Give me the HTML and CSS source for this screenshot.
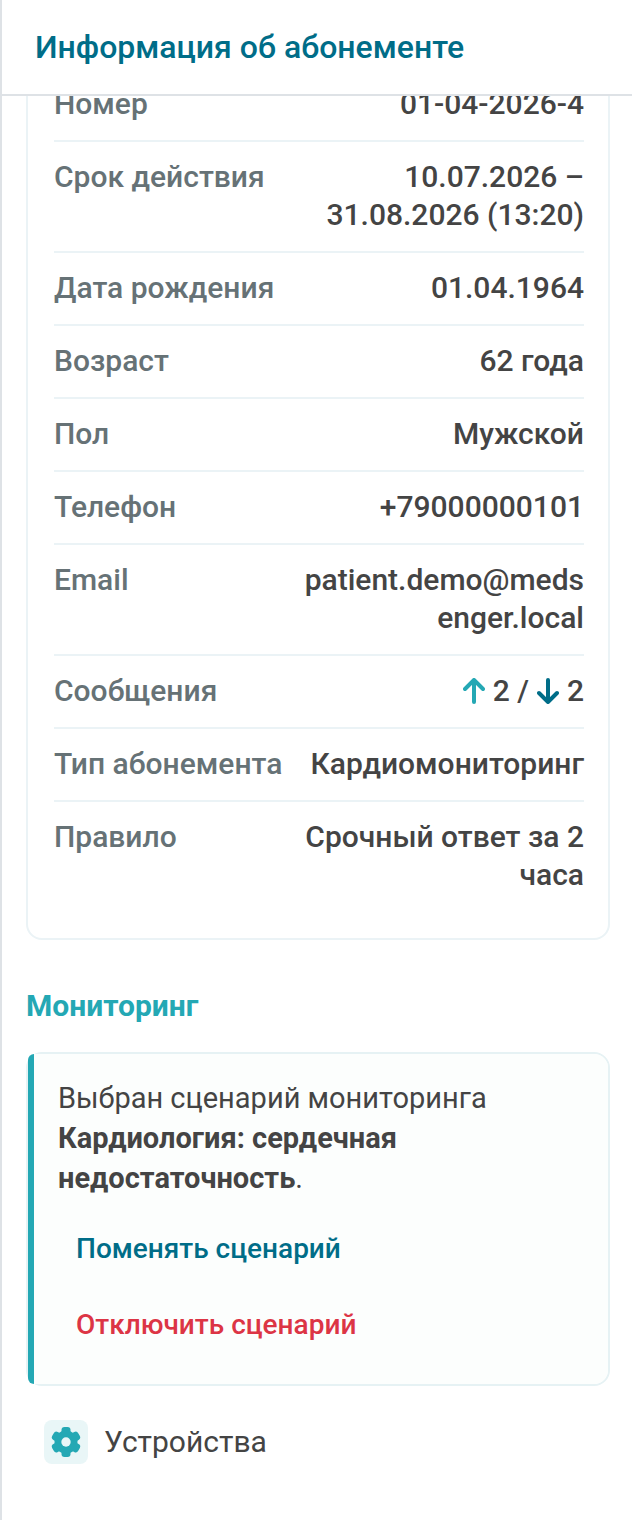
FILE: index.html
```html
<!DOCTYPE html>
<html lang="ru">
  <head>
    <meta charset="utf-8" />
    <meta name="viewport" content="width=device-width, initial-scale=1" />
    <title>Информация об абонементе</title>
    <link rel="stylesheet" href="styles.css">
  </head>

  <body>
    <aside class="panel">
      <header class="panel-header">
        <h1 class="panel-title">Информация об абонементе</h1>
      </header>

      <div class="panel-body">
        <dl class="info-card">
          <div class="info-row">
            <dt>Номер</dt>
            <dd>01-04-2026-4</dd>
          </div>
          <div class="info-row">
            <dt>Срок действия</dt>
            <dd>10.07.2026 – 31.08.2026 (13:20)</dd>
          </div>
          <div class="info-row">
            <dt>Дата рождения</dt>
            <dd>01.04.1964</dd>
          </div>
          <div class="info-row">
            <dt>Возраст</dt>
            <dd>62 года</dd>
          </div>
          <div class="info-row">
            <dt>Пол</dt>
            <dd>Мужской</dd>
          </div>
          <div class="info-row">
            <dt>Телефон</dt>
            <dd>+79000000101</dd>
          </div>
          <div class="info-row">
            <dt>Email</dt>
            <dd>patient.demo@medsenger.local</dd>
          </div>
          <div class="info-row">
            <dt>Сообщения</dt>
            <dd class="messages">
              <svg class="arrow arrow-up" viewBox="0 0 22 26" aria-hidden="true">
                <path d="M11 24V2M2 11l9-9 9 9" />
              </svg>
              <span>2 /</span>
              <svg class="arrow arrow-down" viewBox="0 0 22 26" aria-hidden="true">
                <path d="M11 2v22M2 15l9 9 9-9" />
              </svg>
              <span>2</span>
            </dd>
          </div>
          <div class="info-row">
            <dt>Тип абонемента</dt>
            <dd>Кардиомониторинг</dd>
          </div>
          <div class="info-row">
            <dt>Правило</dt>
            <dd>Срочный ответ за 2 часа</dd>
          </div>
        </dl>

        <h2 class="section-title">Мониторинг</h2>

        <section class="monitoring-card">
          <div class="monitoring-content">
            <p class="monitoring-text">
              Выбран сценарий мониторинга
              <strong>Кардиология: сердечная недостаточность</strong>.
            </p>
            <div class="monitoring-actions">
              <button class="btn btn-change" type="button">Поменять сценарий</button>
              <button class="btn btn-disable" type="button">Отключить сценарий</button>
            </div>
          </div>
        </section>

        <button class="devices" type="button">
          <span class="devices-icon">
            <svg viewBox="0 0 32 32" aria-hidden="true">
              <g class="gear-body">
                <circle cx="16" cy="16" r="11.500" />
                <rect x="11.500" y="1" width="9" height="30" rx="3" />
                <rect x="11.500" y="1" width="9" height="30" rx="3" transform="rotate(60 16 16)" />
                <rect x="11.500" y="1" width="9" height="30" rx="3" transform="rotate(120 16 16)" />
              </g>
              <circle class="gear-hole" cx="16" cy="16" r="4.700" />
            </svg>
          </span>
          Устройства
        </button>
      </div>
    </aside>
  </body>
</html>
```
FILE: styles.css
```css
* {
  box-sizing: border-box;
}

body {
  margin: 0;
  font-family: Roboto, "Liberation Sans", sans-serif;
  color: #444;
  background-color: #fff;
}

.panel {
  display: flex;
  flex-direction: column;
  height: 100vh;
  border-left: 2px solid #dee2e6;
}

.panel-header {
  flex: none;
  padding: 27px 33px;
  border-bottom: 2px solid #dee2e6;
}

.panel-title {
  margin: 0;
  font-size: 32px;
  line-height: 40px;
  font-weight: 500;
  color: #006d88;
}

.panel-body {
  flex: 1;
  min-height: 0;
  padding: 0 22px 0 24px;
  overflow: hidden;
}

/* the list is scrolled under the header */
.info-card {
  margin: -53px 0 47px;
  padding: 24px 24px 27px 26px;
  border: 2px solid #ebf3f6;
  border-radius: 16px;
  font-size: 30px;
  line-height: 38px;
  font-weight: 500;
}

.info-row {
  display: flex;
  justify-content: space-between;
  padding: 16px 0 17px;
  border-bottom: 2px solid #ebf3f6;
}

.info-row:last-child {
  border-bottom: none;
}

.info-row dt {
  color: #667276;
  white-space: nowrap;
}

.info-row dd {
  width: 53%;
  margin: 0;
  text-align: right;
  overflow-wrap: anywhere;
}

.info-row .messages {
  display: flex;
  justify-content: flex-end;
  align-items: center;
  gap: 8px;
}

.arrow {
  width: 22px;
  height: 26px;
  fill: none;
  stroke-width: 4;
  stroke-linecap: round;
  stroke-linejoin: round;
}

.arrow-up {
  stroke: #24a8b4;
}

.arrow-down {
  stroke: #006d88;
}

.section-title {
  margin: 0 0 27px;
  font-size: 30px;
  line-height: 38px;
  font-weight: 700;
  color: #24a8b4;
}

.monitoring-card {
  border: 2px solid #e6f2f4;
  border-radius: 16px;
}

.monitoring-content {
  padding: 24px 24px 29px;
  border-left: 6px solid #24a8b4;
  border-radius: 6px 14px 14px 6px;
  background-color: #fcfefd;
}

.monitoring-text {
  margin: 0 0 21px;
  font-size: 29px;
  line-height: 40px;
}

.monitoring-actions {
  display: flex;
  flex-direction: column;
  align-items: flex-start;
  gap: 16px;
}

.btn {
  padding: 0 18px;
  border: none;
  background: none;
  font: inherit;
  font-size: 28px;
  line-height: 60px;
  font-weight: 500;
  cursor: pointer;
}

.btn-change {
  color: #006d88;
}

.btn-disable {
  color: #dc3545;
}

.devices {
  display: flex;
  align-items: center;
  gap: 16px;
  margin-top: 34px;
  padding: 0 18px;
  border: none;
  background: none;
  font: inherit;
  font-size: 30px;
  line-height: 44px;
  color: #444;
  cursor: pointer;
}

.devices-icon {
  display: flex;
  align-items: center;
  justify-content: center;
  width: 44px;
  height: 44px;
  border-radius: 8px;
  background-color: #e9f6f7;
}

.devices-icon svg {
  width: 32px;
  height: 32px;
}

.gear-body {
  fill: #24a8b4;
}

.gear-hole {
  fill: #e9f6f7;
}
```
